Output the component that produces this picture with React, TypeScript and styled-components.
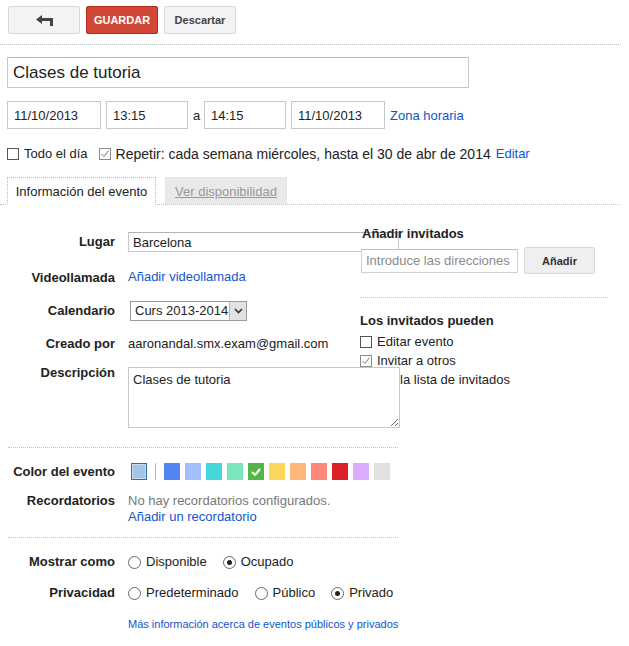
import * as React from 'react'
import styled, { createGlobalStyle } from 'styled-components'

const GlobalStyle = createGlobalStyle`
  body {
    margin: 0;
    background: #fff;
    font-family: Arial, "Liberation Sans", sans-serif;
    font-size: 13px;
    color: #222;
  }
`

const SWATCHES = [
  '#5484ed', '#a4bdfc', '#46d6db', '#7ae7bf', '#51b749', '#fbd75b',
  '#ffb878', '#ff887c', '#dc2127', '#dbadff', '#e1e1e1',
]

const Page = styled.div`
  width: 629px;
  padding-top: 6px;
`

const Toolbar = styled.div`
  display: flex;
  gap: 6px;
  padding-left: 8px;
`

const ToolButton = styled.button<{ $primary?: boolean }>`
  width: 72px;
  height: 28px;
  display: flex;
  align-items: center;
  justify-content: center;
  border-radius: 2px;
  font-family: Arial, "Liberation Sans", sans-serif;
  font-size: 11px;
  font-weight: bold;
  padding: 0;
  border: 1px solid ${p => (p.$primary ? '#b0281a' : '#d8d8d8')};
  background: ${p => (p.$primary ? '#d14836' : '#f3f3f3')};
  color: ${p => (p.$primary ? '#fff' : '#444')};
  text-transform: ${p => (p.$primary ? 'uppercase' : 'none')};
`

const TopRule = styled.div`
  margin: 10px 8px 0 0;
  border-top: 1px dotted #b8c4c4;
`

const Header = styled.div`
  padding-left: 7px;
`

const TitleInput = styled.input`
  display: block;
  box-sizing: border-box;
  margin-top: 12px;
  width: 462px;
  height: 31px;
  padding: 0 5px;
  border: 1px solid #c8c8c8;
  border-top-color: #bbb;
  font-family: Arial, "Liberation Sans", sans-serif;
  font-size: 17px;
  color: #222;
  outline: none;
`

const DateRow = styled.div`
  display: flex;
  align-items: center;
  gap: 5px;
  margin-top: 13px;
`

const DateInput = styled.input<{ $w: number }>`
  box-sizing: border-box;
  width: ${p => p.$w}px;
  height: 28px;
  padding: 0 6px;
  border: 1px solid #c8c8c8;
  font-family: Arial, "Liberation Sans", sans-serif;
  font-size: 13px;
  color: #222;
  outline: none;
`

const Sep = styled.span`
  width: 6px;
  text-align: center;
  color: #222;
`

const Link = styled.a<{ $small?: boolean }>`
  color: #15c;
  text-decoration: none;
  font-size: ${p => (p.$small ? '11px' : '13px')};
  cursor: pointer;
`

const OptionsRow = styled.div`
  display: flex;
  align-items: center;
  height: 16px;
  margin-top: 17px;
  gap: 11px;
`

const Check = styled.label<{ $size?: number }>`
  display: flex;
  align-items: center;
  gap: 5px;
  white-space: nowrap;
  line-height: 16px;
  font-size: ${p => p.$size ?? 13}px;
`

const Box = styled.span<{ $checked?: boolean }>`
  box-sizing: border-box;
  width: 12px;
  height: 12px;
  flex: none;
  display: flex;
  align-items: center;
  justify-content: center;
  background: #fff;
  border: 1px solid ${p => (p.$checked ? '#8a8a8a' : '#555')};
`

const CheckBox: React.FC<{ checked?: boolean; label: string; size?: number }> = ({ checked, label, size }) => (
  <Check $size={size}>
    <Box $checked={checked}>
      {checked && (
        <svg width="10" height="10" viewBox="0 0 10 10">
          <path d="M1.5 5 L4 7.5 L8.5 1.5" fill="none" stroke="#777" strokeWidth="1" />
        </svg>
      )}
    </Box>
    {label}
  </Check>
)

const Tabs = styled.div`
  display: flex;
  align-items: flex-end;
  gap: 9px;
  margin-top: 15px;
  padding-left: 7px;
  margin-right: 9px;
  border-bottom: 1px dotted #c8c0cc;
`

const Tab = styled.div<{ $active?: boolean; $w: number }>`
  box-sizing: border-box;
  width: ${p => p.$w}px;
  height: ${p => (p.$active ? 28 : 27)}px;
  margin-bottom: ${p => (p.$active ? -1 : 0)}px;
  display: flex;
  align-items: center;
  justify-content: center;
  background: ${p => (p.$active ? '#fff' : '#e9e9e9')};
  border: 1px ${p => (p.$active ? 'dotted #bbb' : 'solid #e4e4e4')};
  border-bottom: ${p => (p.$active ? '1px solid #fff' : 'none')};
  color: ${p => (p.$active ? '#222' : '#999')};
  text-decoration: ${p => (p.$active ? 'none' : 'underline')};
`

const Body = styled.div`
  display: flex;
  padding-left: 8px;
`

const LeftColumn = styled.div`
  width: 390px;
  flex: none;
  padding-top: 27px;
`

const RightColumn = styled.div`
  width: 248px;
  flex: none;
  margin-left: -38px;
  padding-top: 21px;
`

const FieldGrid = styled.div<{ $gap: number; $top?: number }>`
  display: grid;
  grid-template-columns: 107px 272px;
  column-gap: 13px;
  row-gap: ${p => p.$gap}px;
  align-items: center;
  margin-top: ${p => p.$top ?? 0}px;
`

const Label = styled.div<{ $top?: boolean; $shift?: number }>`
  text-align: right;
  font-weight: bold;
  line-height: 16px;
  color: #222;
  align-self: ${p => (p.$top ? 'start' : 'center')};
  margin-top: ${p => p.$shift ?? 0}px;
`

const TextInput = styled.input`
  box-sizing: border-box;
  width: 271px;
  height: 20px;
  padding: 0 4px;
  border: 1px solid #c8c8c8;
  border-top-color: #b4b4b4;
  font-family: Arial, "Liberation Sans", sans-serif;
  font-size: 13px;
  color: #222;
  outline: none;
`

const LinkCell = styled.div`
  line-height: 22px;
  padding-top: 1px;
`

const Select = styled.div`
  box-sizing: border-box;
  width: 117px;
  height: 20px;
  margin-left: 2px;
  display: flex;
  align-items: stretch;
  border: 1px solid #9a9a9a;
  background: #fff;
  font-size: 13px;
`

const SelectText = styled.span`
  flex: 1;
  padding-left: 4px;
  line-height: 18px;
  white-space: nowrap;
`

const SelectArrow = styled.span`
  width: 16px;
  display: flex;
  align-items: center;
  justify-content: center;
  background: #e2e2e2;
  border-left: 1px solid #b8b8b8;
`

const PlainCell = styled.div`
  line-height: 20px;
  white-space: nowrap;
`

const TextArea = styled.textarea`
  position: relative;
  z-index: 1;
  box-sizing: border-box;
  width: 272px;
  height: 61px;
  padding: 4px;
  border: 1px solid #c8c8c8;
  background: #fff;
  font-family: Arial, "Liberation Sans", sans-serif;
  font-size: 13px;
  color: #222;
  outline: none;
  display: block;
`

const Rule = styled.div<{ $top: number; $color?: string }>`
  margin-top: ${p => p.$top}px;
  border-top: 1px dotted ${p => p.$color ?? '#c9bccd'};
`

const SwatchRow = styled.div`
  display: flex;
  align-items: center;
  gap: 5px;
  padding-left: 3px;
`

const Swatch = styled.span<{ $color: string; $current?: boolean }>`
  box-sizing: border-box;
  width: 16px;
  height: 17px;
  display: flex;
  align-items: center;
  justify-content: center;
  background: ${p => p.$color};
  border: ${p => (p.$current ? '1px solid #2f6ea8' : 'none')};
  box-shadow: ${p => (p.$current ? 'inset 0 0 0 1px #c9dcef' : 'none')};
`

const SwatchSep = styled.span`
  width: 1px;
  height: 17px;
  background: #bbb;
  margin: 0 3px;
`

const Stack = styled.div`
  line-height: 16px;
  align-self: start;
`

const Muted = styled.div`
  color: #777;
`

const RadioGroup = styled.div`
  display: flex;
  align-items: center;
  gap: 16px;
  line-height: 16px;
  white-space: nowrap;
`

const RadioItem = styled.label`
  display: flex;
  align-items: center;
  gap: 5px;
`

const Circle = styled.span`
  box-sizing: border-box;
  width: 13px;
  height: 13px;
  border-radius: 50%;
  border: 1px solid #666;
  background: #fff;
  display: flex;
  align-items: center;
  justify-content: center;
`

const Dot = styled.span`
  width: 5px;
  height: 5px;
  border-radius: 50%;
  background: #222;
`

const Radio: React.FC<{ checked?: boolean; label: string }> = ({ checked, label }) => (
  <RadioItem>
    <Circle>{checked && <Dot />}</Circle>
    {label}
  </RadioItem>
)

const Heading = styled.div<{ $indent?: number; $top?: number }>`
  font-weight: bold;
  line-height: 16px;
  padding-left: ${p => p.$indent ?? 0}px;
  margin-top: ${p => p.$top ?? 0}px;
`

const GuestRow = styled.div`
  display: flex;
  align-items: center;
  gap: 6px;
  margin-top: 5px;
  padding-left: 1px;
`

const GuestInput = styled.input`
  box-sizing: border-box;
  width: 157px;
  height: 24px;
  padding: 0 4px;
  border: 1px solid #d0d0d0;
  border-top-color: #c0c0c0;
  background: #fff;
  font-family: Arial, "Liberation Sans", sans-serif;
  font-size: 13px;
  outline: none;
  &::placeholder {
    color: #8a8a8a;
  }
`

const AddButton = styled.button`
  width: 71px;
  height: 27px;
  border: 1px solid #d8d8d8;
  border-radius: 2px;
  background: #efefef;
  font-family: Arial, "Liberation Sans", sans-serif;
  font-size: 11px;
  font-weight: bold;
  color: #333;
  padding: 0;
`

const PermList = styled.div`
  margin-top: 3px;
  display: flex;
  flex-direction: column;
  & > label {
    line-height: 19px;
  }
`

const BackIcon = () => (
  <svg width="17" height="11" viewBox="0 0 17 11">
    <path d="M0 4.5 L6 0 L6 3 L15 3 L15 6 L6 6 L6 9 Z" fill="#444" />
    <rect x="14" y="3" width="3" height="8" fill="#444" />
  </svg>
)

export default function App() {
  return (
    <Page>
      <GlobalStyle />
      <Toolbar>
        <ToolButton aria-label="Atrás"><BackIcon /></ToolButton>
        <ToolButton $primary>Guardar</ToolButton>
        <ToolButton>Descartar</ToolButton>
      </Toolbar>
      <TopRule />

      <Header>
        <TitleInput readOnly defaultValue="Clases de tutoria" />
        <DateRow>
          <DateInput $w={94} readOnly defaultValue="11/10/2013" />
          <DateInput $w={82} readOnly defaultValue="13:15" />
          <Sep>a</Sep>
          <DateInput $w={82} readOnly defaultValue="14:15" />
          <DateInput $w={94} readOnly defaultValue="11/10/2013" />
          <Link>Zona horaria</Link>
        </DateRow>
        <OptionsRow>
          <CheckBox label="Todo el día" />
          <Check>
            <CheckBox checked size={14} label="Repetir: cada semana miércoles, hasta el 30 de abr de 2014" />
            <Link>Editar</Link>
          </Check>
        </OptionsRow>
      </Header>

      <Tabs>
        <Tab $active $w={149}>Información del evento</Tab>
        <Tab $w={122}>Ver disponibilidad</Tab>
      </Tabs>

      <Body>
        <LeftColumn>
          <FieldGrid $gap={13}>
            <Label>Lugar</Label>
            <TextInput readOnly defaultValue="Barcelona" />
            <Label $shift={2}>Videollamada</Label>
            <LinkCell><Link>Añadir videollamada</Link></LinkCell>
            <Label>Calendario</Label>
            <Select>
              <SelectText>Curs 2013-2014</SelectText>
              <SelectArrow>
                <svg width="9" height="6" viewBox="0 0 9 6">
                  <path d="M1 1 L4.5 4.5 L8 1" fill="none" stroke="#333" strokeWidth="1.6" />
                </svg>
              </SelectArrow>
            </Select>
            <Label>Creado por</Label>
            <PlainCell>aaronandal.smx.exam@gmail.com</PlainCell>
            <Label $top $shift={-2}>Descripción</Label>
            <TextArea readOnly defaultValue="Clases de tutoria" />
          </FieldGrid>

          <Rule $top={19} />

          <FieldGrid $gap={13} $top={15}>
            <Label>Color del evento</Label>
            <SwatchRow>
              <Swatch $color="#a2c4e6" $current />
              <SwatchSep />
              {SWATCHES.map(c => (
                <Swatch key={c} $color={c}>
                  {c === '#51b749' && (
                    <svg width="10" height="8" viewBox="0 0 10 8">
                      <path d="M1 4 L4 7 L9 1" fill="none" stroke="#fff" strokeWidth="2" />
                    </svg>
                  )}
                </Swatch>
              ))}
            </SwatchRow>
            <Label $top>Recordatorios</Label>
            <Stack>
              <Muted>No hay recordatorios configurados.</Muted>
              <Link>Añadir un recordatorio</Link>
            </Stack>
          </FieldGrid>

          <Rule $top={12} />

          <FieldGrid $gap={15} $top={16}>
            <Label>Mostrar como</Label>
            <RadioGroup>
              <Radio label="Disponible" />
              <Radio checked label="Ocupado" />
            </RadioGroup>
            <Label>Privacidad</Label>
            <RadioGroup>
              <Radio label="Predeterminado" />
              <Radio label="Público" />
              <Radio checked label="Privado" />
            </RadioGroup>
            <span />
            <Stack><Link $small>Más información acerca de eventos públicos y privados</Link></Stack>
          </FieldGrid>
        </LeftColumn>

        <RightColumn>
          <Heading $indent={2}>Añadir invitados</Heading>
          <GuestRow>
            <GuestInput placeholder="Introduce las direcciones de correo electrónico" />
            <AddButton>Añadir</AddButton>
          </GuestRow>
          <Rule $top={23} $color="#c4c8c8" />
          <Heading $top={15}>Los invitados pueden</Heading>
          <PermList>
            <CheckBox label="Editar evento" />
            <CheckBox checked label="Invitar a otros" />
            <CheckBox checked label="Ver la lista de invitados" />
          </PermList>
        </RightColumn>
      </Body>
    </Page>
  )
}
